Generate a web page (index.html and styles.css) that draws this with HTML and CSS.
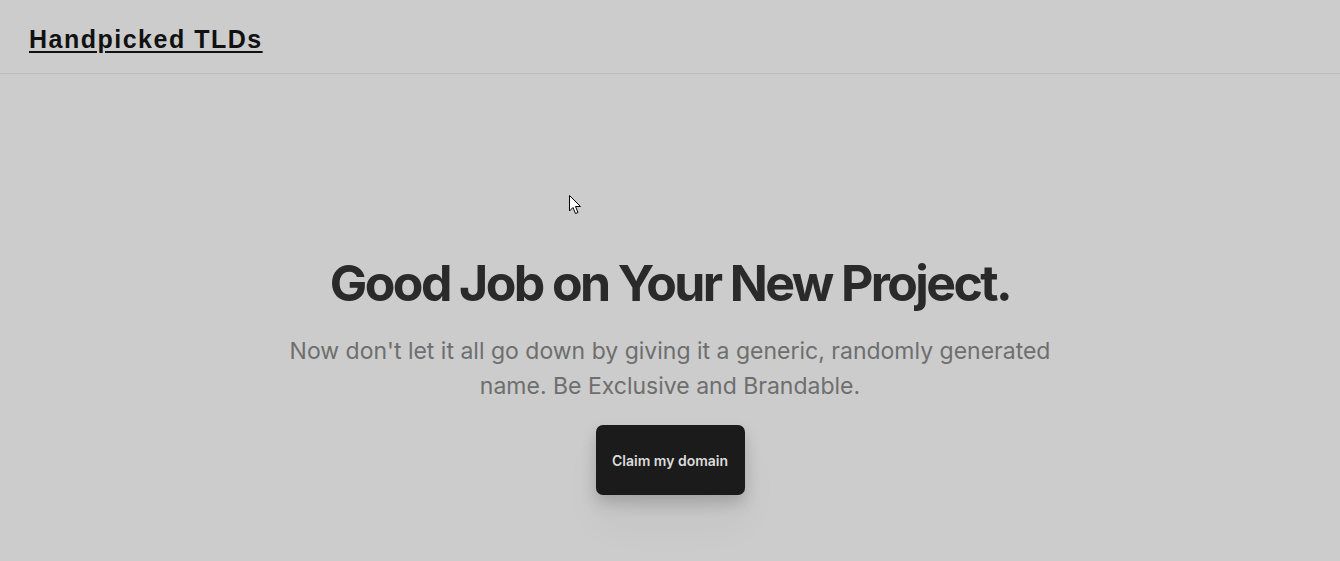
FILE: index.html
```html
<!DOCTYPE html>
<html lang="en">
<head>
<meta charset="utf-8">
<title>Handpicked TLDs</title>
<link rel="stylesheet" href="styles.css">
</head>
<body>
<header class="site-header">
  <a class="brand" href="#">Handpicked TLDs</a>
</header>
<main class="hero">
  <h1 class="hero-title">Good Job on Your New Project.</h1>
  <p class="hero-text">Now don't let it all go down by giving it a generic, randomly generated name. Be Exclusive and Brandable.</p>
  <a class="cta" href="#">Claim my domain</a>
</main>
<svg class="cursor" width="13" height="21" viewBox="0 0 13 21"><path d="M0.5 0.5 L0.5 16 L4 12.5 L6.5 18.5 L9 17.5 L6.5 11.5 L11.5 11.5 Z" fill="#fff" stroke="#000" stroke-width="1"/></svg>
</body>
</html>
```
FILE: styles.css
```css
* { box-sizing: border-box; }
html, body { margin: 0; padding: 0; }
body {
  background: #cccccc;
  font-family: Inter, "Noto Sans", sans-serif;
  min-height: 561px;
  overflow: hidden;
}
.site-header {
  height: 74px;
  border-bottom: 1px solid #bcbcbc;
  display: flex;
  align-items: center;
  padding: 0 29px;
}
.brand {
  font-family: "Liberation Sans", Arial, sans-serif;
  font-weight: 700;
  font-size: 25px;
  letter-spacing: 1.5px;
  color: #111;
  text-decoration: underline;
  text-decoration-thickness: 2px;
  text-underline-offset: 3px;
  margin-top: 6px;
}
.hero {
  display: flex;
  flex-direction: column;
  align-items: center;
  text-align: center;
  padding-top: 179px;
}
.hero-title {
  margin: 0;
  font-size: 50px;
  font-weight: 700;
  letter-spacing: -2.6px;
  color: #2a2a2a;
  line-height: 60px;
}
.hero-text {
  margin: 21px 0 0;
  max-width: 800px;
  font-size: 23px;
  line-height: 35px;
  color: #6e6e6e;
}
.cta {
  margin-top: 21px;
  width: 149px;
  height: 70px;
  display: flex;
  align-items: center;
  justify-content: center;
  background: #1b1b1b;
  color: #dcdcdc;
  font-size: 14px;
  font-weight: 600;
  text-decoration: none;
  border-radius: 7px;
  box-shadow: 0 8px 16px rgba(0,0,0,0.18), 0 30px 40px rgba(0,0,0,0.04);
}
.cursor {
  position: absolute;
  left: 569px;
  top: 195px;
}
```
